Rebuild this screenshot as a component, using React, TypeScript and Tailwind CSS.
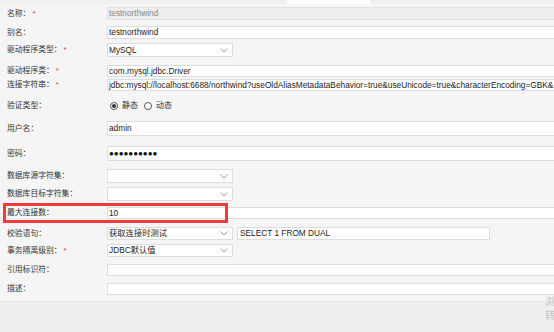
import React from 'react';

// ─── small pieces ─────────────────────────────────────────
function Chevron() {
  return (
    <svg width="8" height="5" viewBox="0 0 8 5" className="shrink-0">
      <polyline points="0.5,0.5 4,4 7.5,0.5" fill="none" stroke="#9a9a9a" strokeWidth="0.9" />
    </svg>
  );
}

function Row({
  label,
  required,
  className,
  children,
}: {
  label: string;
  required?: boolean;
  className: string;
  children: React.ReactNode;
}) {
  return (
    <div className={'relative flex items-center ' + className}>
      <div className="w-[107px] shrink-0 pl-[7px] text-[7.8px] leading-none text-[#333] whitespace-nowrap">
        {label}：
        {required && <span className="ml-[2px] text-[#e53935]">*</span>}
      </div>
      {children}
    </div>
  );
}

function TextBox({ value, disabled }: { value?: string; disabled?: boolean }) {
  return (
    <div
      className={
        'h-full w-[470px] shrink-0 border flex items-center pl-[1px] text-[8.3px] leading-none whitespace-nowrap overflow-hidden ' +
        (disabled ? 'bg-[#eeeeee] border-[#e2e2e2] text-[#8a8a8a]' : 'bg-white border-[#dddddd] text-[#222]')
      }
    >
      {value}
    </div>
  );
}

function SelectBox({ value }: { value?: string }) {
  return (
    <div className="h-full w-[126px] shrink-0 border border-[#dddddd] bg-white flex items-center justify-between pl-[1px] pr-[4px] text-[8.3px] leading-none text-[#222] whitespace-nowrap">
      <span>{value}</span>
      <Chevron />
    </div>
  );
}

function Radio({ checked, label }: { checked?: boolean; label: string }) {
  return (
    <div className="flex items-center gap-[4px]">
      <span className="w-[8px] h-[8px] rounded-full border border-[#555] bg-white flex items-center justify-center">
        {checked && <span className="w-[4px] h-[4px] rounded-full bg-[#333]" />}
      </span>
      <span className="text-[8px] leading-none text-[#333]">{label}</span>
    </div>
  );
}

export default function App() {
  return (
    <div className="w-[554px] h-[332px] overflow-hidden bg-[#f5f5f5] font-['Liberation_Sans','Noto_Sans_CJK_SC',sans-serif] flex flex-col">
      {/* top tab strip */}
      <div className="h-[4px] shrink-0 bg-[#f0f0f0]">
        <div className="ml-[287px] w-[83px] h-full bg-white" />
      </div>

      <Row label="名称" required className="mt-[3px] h-[13px]">
        <TextBox value="testnorthwind" disabled />
      </Row>
      <Row label="别名" className="mt-[6px] h-[13px]">
        <TextBox value="testnorthwind" />
      </Row>
      <Row label="驱动程序类型" required className="mt-[4px] h-[14px]">
        <SelectBox value="MySQL" />
      </Row>
      <Row label="驱动程序类" required className="mt-[8px] h-[12px]">
        <TextBox value="com.mysql.jdbc.Driver" />
      </Row>
      <Row label="连接字符串" required className="mt-[2px] h-[12px]">
        <TextBox value="jdbc:mysql://localhost:6688/northwind?useOldAliasMetadataBehavior=true&useUnicode=true&characterEncoding=GBK&" />
      </Row>
      <Row label="验证类型" className="mt-[9px] h-[12px]">
        <div className="flex items-center gap-[6px] pl-[3px]">
          <Radio checked label="静态" />
          <Radio label="动态" />
        </div>
      </Row>
      <Row label="用户名" className="mt-[9px] h-[15px]">
        <TextBox value="admin" />
      </Row>
      <Row label="密码" className="mt-[10px] h-[15px]">
        <div className="h-full w-[470px] shrink-0 border border-[#dddddd] bg-white flex items-center pl-[1px] text-[8px] leading-none tracking-[0px] text-[#111]">
          ●●●●●●●●●●
        </div>
      </Row>
      <Row label="数据库源字符集" className="mt-[8px] h-[14px]">
        <SelectBox />
      </Row>
      <Row label="数据库目标字符集" className="mt-[4px] h-[14px]">
        <SelectBox />
      </Row>
      <Row label="最大连接数" className="mt-[6px] h-[12px]">
        <TextBox value="10" />
        <div className="absolute left-[3px] top-[-4px] w-[225px] h-[20px] border-[3px] border-[#f23a3a]" />
      </Row>
      <Row label="校验语句" className="mt-[8px] h-[13px]">
        <SelectBox value="获取连接时测试" />
        <div className="ml-[4px] h-full w-[253px] shrink-0 border border-[#dddddd] bg-white flex items-center pl-[2px] text-[8.3px] leading-none text-[#222] whitespace-nowrap">
          SELECT 1 FROM DUAL
        </div>
      </Row>
      <Row label="事务隔离级别" required className="mt-[4px] h-[13px]">
        <SelectBox value="JDBC默认值" />
      </Row>
      <Row label="引用标识符" className="mt-[7px] h-[12px]">
        <TextBox />
      </Row>
      <Row label="描述" className="mt-[7px] h-[12px]">
        <TextBox />
      </Row>

      {/* footer */}
      <div className="mt-[6px] flex-1 bg-[#efefef] border-t border-[#e6e6e6] flex">
        <div className="ml-[545px] -mt-[5px] flex flex-col gap-[4px] text-[10px] leading-none text-[#c4c4c4] whitespace-nowrap">
          <span>浏览</span>
          <span>转换</span>
        </div>
      </div>
    </div>
  );
}
